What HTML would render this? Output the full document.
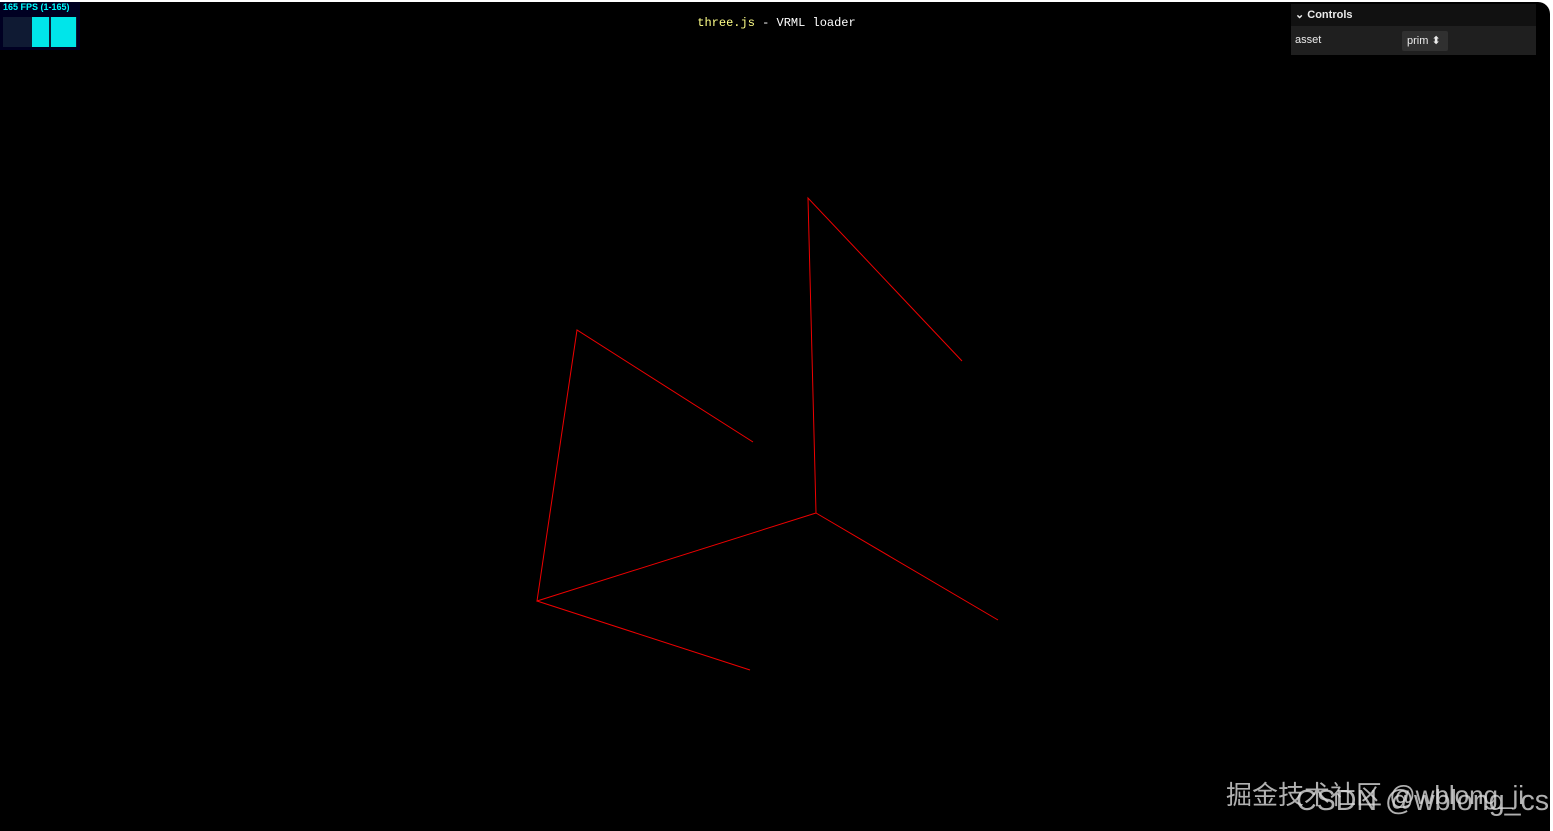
<!DOCTYPE html>
<html><head><meta charset="utf-8"><style>
html,body{margin:0;padding:0;width:1553px;height:831px;overflow:hidden;background:#fff}
#c{position:absolute;left:0;top:2px;width:1550px;height:829px;background:#000;border-top-right-radius:12px}
#fps{position:absolute;left:0;top:2px;width:80px;height:48px;background:#002;}
#fps .t{position:absolute;left:3px;top:0;font:bold 9px "Liberation Sans",sans-serif;color:#0ff}
#fps .g{position:absolute;left:3px;top:15px;width:74px;height:30px;background:#0f1a33}
#fps .b1{position:absolute;left:32px;top:15px;width:17px;height:30px;background:#00e5ea}
#fps .b2{position:absolute;left:51px;top:15px;width:25px;height:30px;background:#00e5ea}
#title{position:absolute;left:0;width:1553px;top:16px;text-align:center;font:12px "Liberation Mono",monospace;color:#fff}
#title span{color:#ff8}
#gui{position:absolute;left:1291px;top:4px;width:245px;height:51px;background:#1f1f1f;font:11px "Liberation Sans",sans-serif;color:#ebebeb}
#gui .h{height:22px;line-height:22px;background:#111;padding-left:4px;font-weight:bold}
#gui .r{height:29px;line-height:29px;padding-left:4px;position:relative}
#gui .s{position:absolute;left:111px;top:5px;width:46px;height:20px;line-height:20px;background:#303030;border-radius:2px;padding-left:5px;box-sizing:border-box}
.wm{position:absolute;font:26px "Liberation Sans","Noto Sans CJK SC",sans-serif;color:rgba(220,220,220,.8);white-space:nowrap}
</style></head><body>
<div id="c"></div>
<svg style="position:absolute;left:0;top:0" width="1553" height="831">
<g stroke="#e00" stroke-width="1" fill="none">
<polyline points="753,442 577,330 537,601 816,513 808,198 962,361"/>
<line x1="816" y1="513" x2="998" y2="620"/>
<line x1="537" y1="601" x2="750" y2="670"/>
</g></svg>
<div id="fps"><div class="g"></div><div class="b1"></div><div class="b2"></div><div class="t">165 FPS (1-165)</div></div>
<div id="title"><span>three.js</span> - VRML loader</div>
<div id="gui"><div class="h">⌄ Controls</div><div class="r">asset<div class="s">prim ⬍</div></div></div>
<div class="wm" style="left:1226px;top:775px">掘金技术社区 @wblong_ji</div>
<div class="wm" style="left:1296px;top:785px;font-size:28.6px">CSDN @wblong_cs</div>
</body></html>
